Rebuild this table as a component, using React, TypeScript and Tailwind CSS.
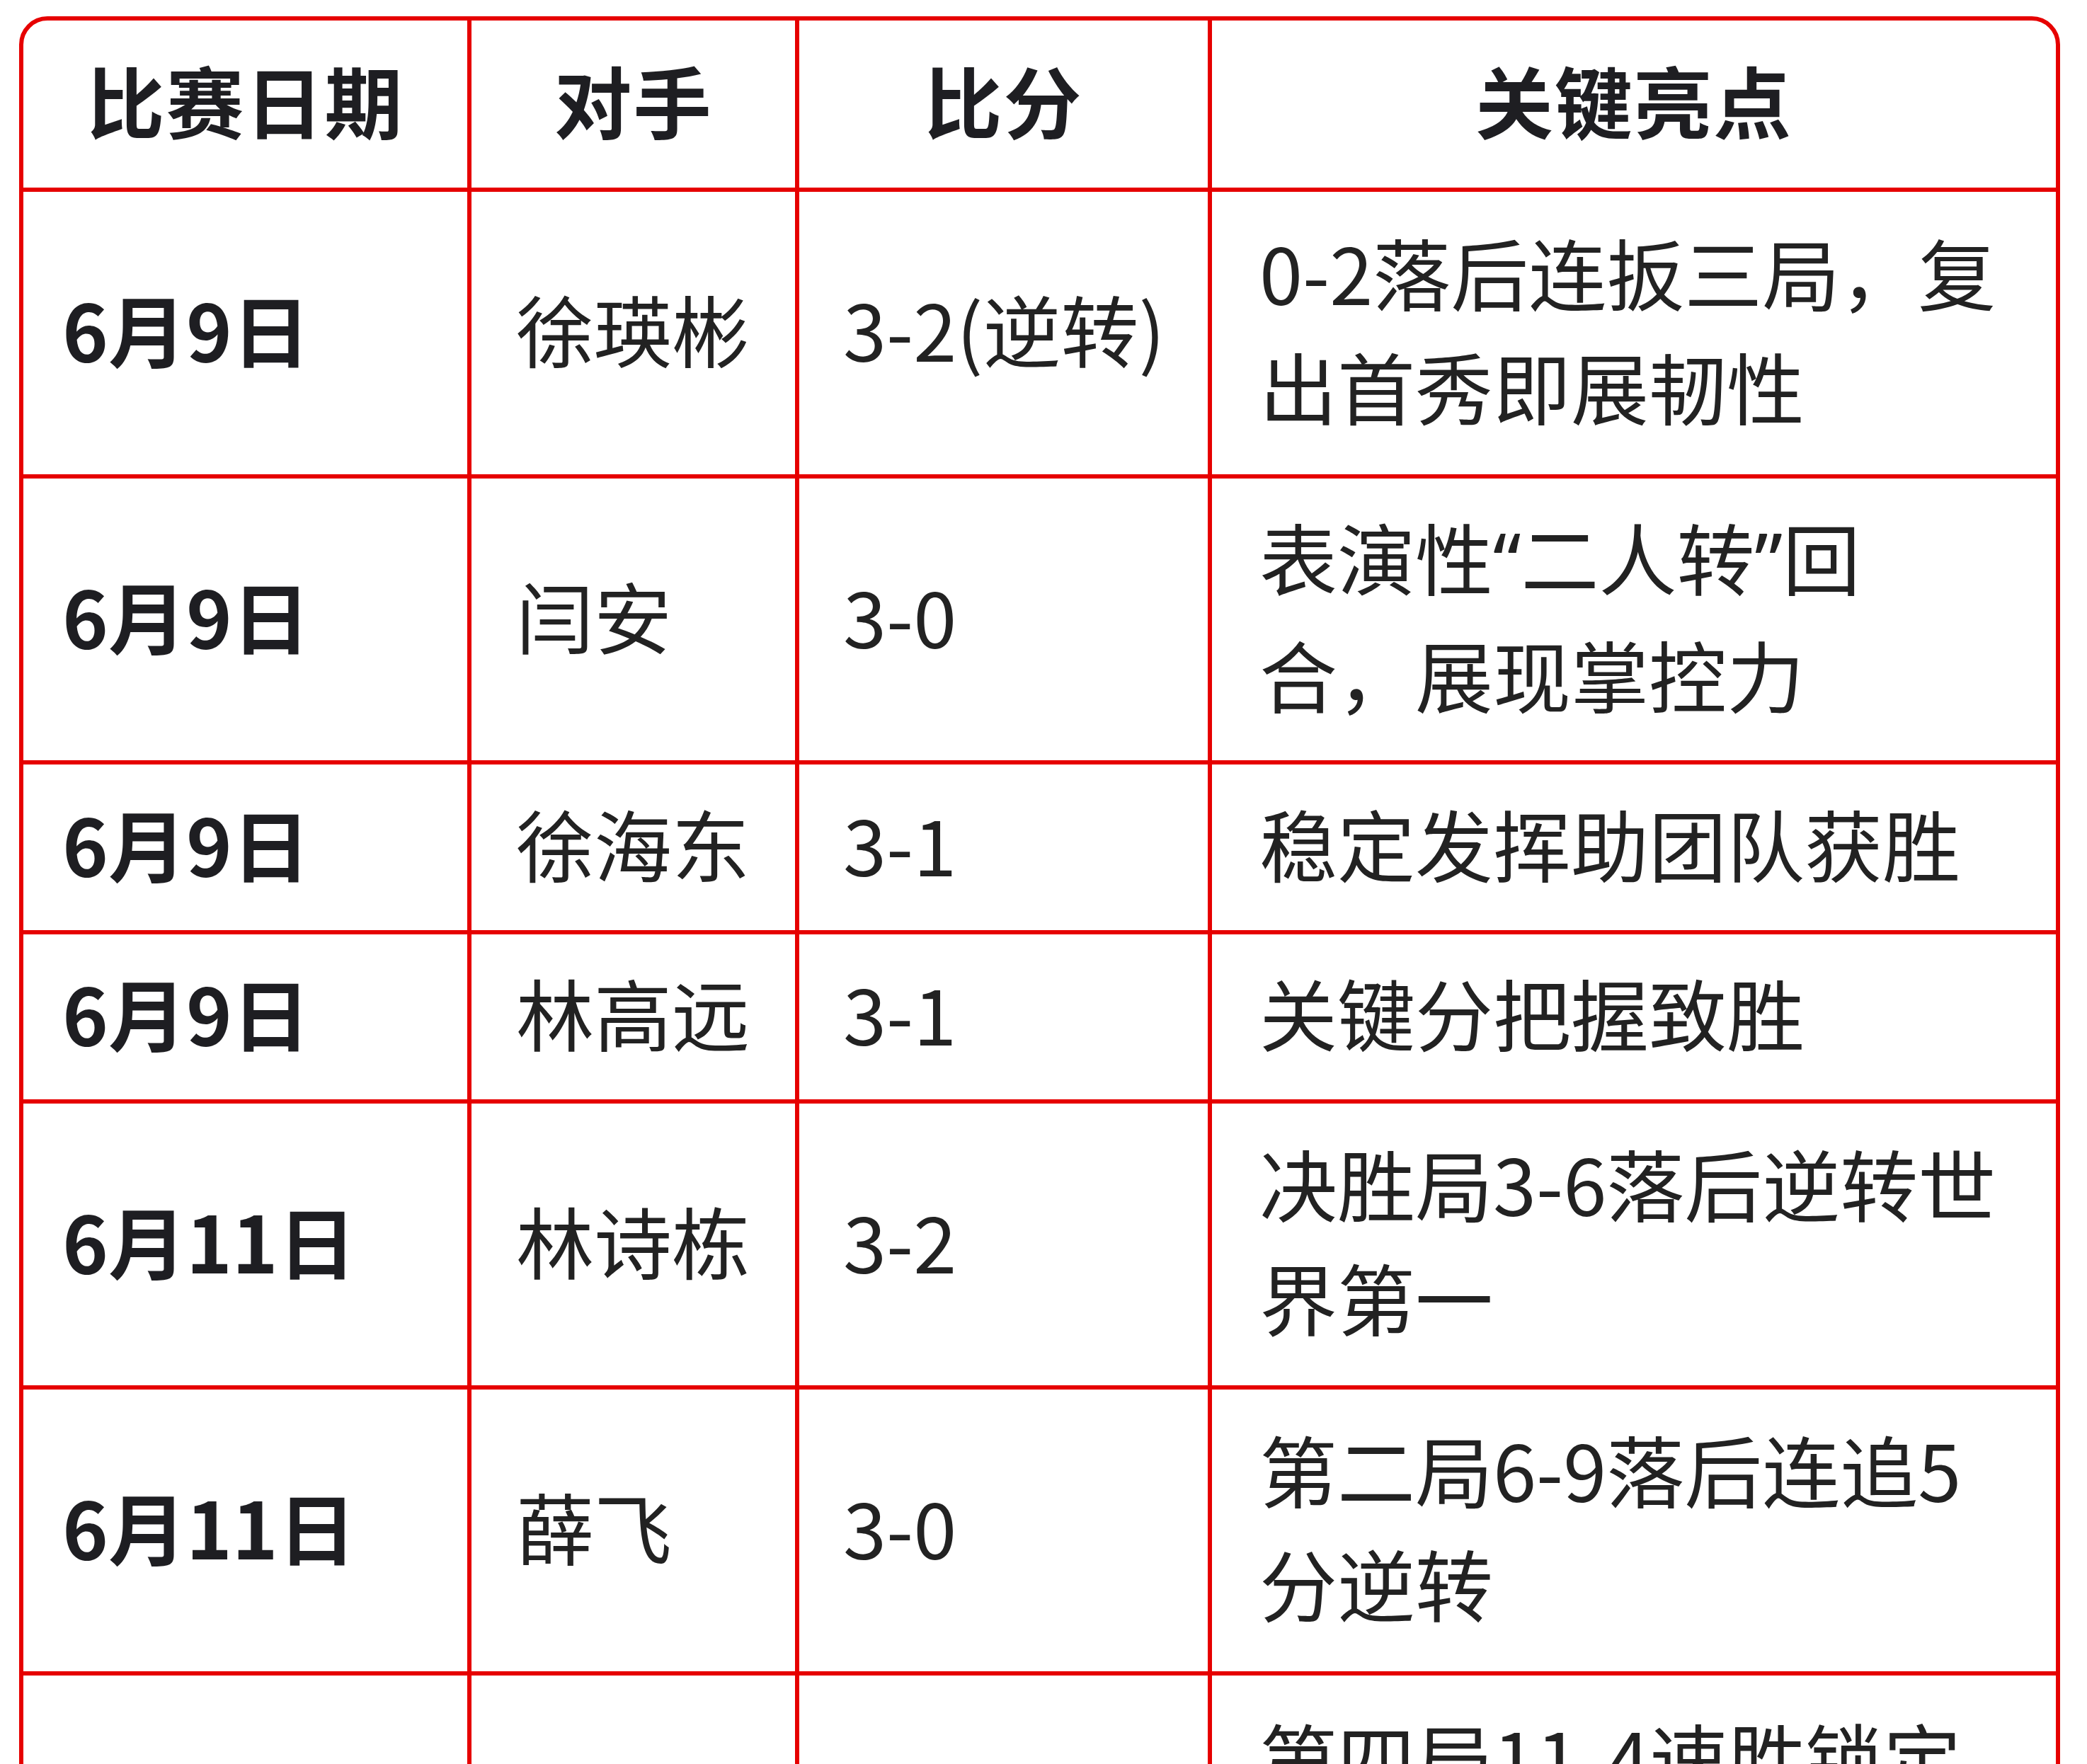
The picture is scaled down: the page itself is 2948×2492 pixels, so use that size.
import React from 'react';

type Row = {
  date: string;
  opponent: string;
  score: string;
  note: React.ReactNode[];
};

// narrow latin quotes, as in the screenshot
const Q = ({ c }: { c: string }) => <span className="font-['Noto_Sans',sans-serif]">{c}</span>;

const rows: Row[] = [
  { date: '6月9日', opponent: '徐瑛彬', score: '3-2(逆转)', note: ['0-2落后连扳三局，复', '出首秀即展韧性'] },
  {
    date: '6月9日',
    opponent: '闫安',
    score: '3-0',
    note: [
      <>
        表演性<Q c="“" />二人转<Q c="”" />回
      </>,
      '合，展现掌控力',
    ],
  },
  { date: '6月9日', opponent: '徐海东', score: '3-1', note: ['稳定发挥助团队获胜'] },
  { date: '6月9日', opponent: '林高远', score: '3-1', note: ['关键分把握致胜'] },
  { date: '6月11日', opponent: '林诗栋', score: '3-2', note: ['决胜局3-6落后逆转世', '界第一'] },
  { date: '6月11日', opponent: '薛飞', score: '3-0', note: ['第二局6-9落后连追5', '分逆转'] },
  { date: '', opponent: '', score: '', note: ['第四局11-4速胜锁定', '胜局'] },
];

const line = 'border-[#e60000]';

export default function App() {
  return (
    <div className="min-h-screen bg-white pl-[27px] pt-[23px] pb-[60px] font-['Noto_Sans_CJK_SC','Noto_Sans',sans-serif] text-[110px] text-[#222222]">
      <div className={`w-[2883px] overflow-hidden rounded-[40px] border-[6px] ${line} bg-white`}>
        <div className="grid grid-cols-[633px_463px_583px_1192px] grid-rows-[242px_405px_404px_240px_239px_404px_404px_404px]">
          {/* header */}
          <div className={`flex items-center justify-center border-r-[6px] border-b-[6px] ${line} pb-[14px] font-bold tracking-[2px] text-[#1e1e22]`}>
            比赛日期
          </div>
          <div className={`flex items-center justify-center border-r-[6px] border-b-[6px] ${line} pb-[14px] font-bold tracking-[2px] text-[#1e1e22]`}>
            对手
          </div>
          <div className={`flex items-center justify-center border-r-[6px] border-b-[6px] ${line} pb-[14px] font-bold tracking-[2px] text-[#1e1e22]`}>
            比分
          </div>
          <div className={`flex items-center justify-center border-b-[6px] ${line} pb-[14px] font-bold tracking-[2px] text-[#1e1e22]`}>
            关键亮点
          </div>

          {rows.map((r, i) => {
            const last = i === rows.length - 1;
            const bottom = last ? '' : 'border-b-[6px]';
            return (
              <React.Fragment key={i}>
                <div className={`flex items-center border-r-[6px] ${bottom} ${line} pb-[14px] pl-[55px] font-bold whitespace-nowrap text-[#1e1e22]`}>
                  {r.date}
                </div>
                <div className={`flex items-center border-r-[6px] ${bottom} ${line} pb-[14px] pl-[63px] whitespace-nowrap`}>
                  {r.opponent}
                </div>
                <div className={`flex items-center border-r-[6px] ${bottom} ${line} pb-[14px] pl-[62px] whitespace-nowrap`}>
                  {r.score}
                </div>
                <div className={`flex items-center ${bottom} ${line} pb-[14px] pl-[67px]`}>
                  <div className="leading-[161px]">
                    {r.note.map((t, j) => (
                      <div key={j} className="whitespace-nowrap">
                        {t}
                      </div>
                    ))}
                  </div>
                </div>
              </React.Fragment>
            );
          })}
        </div>
      </div>
    </div>
  );
}
